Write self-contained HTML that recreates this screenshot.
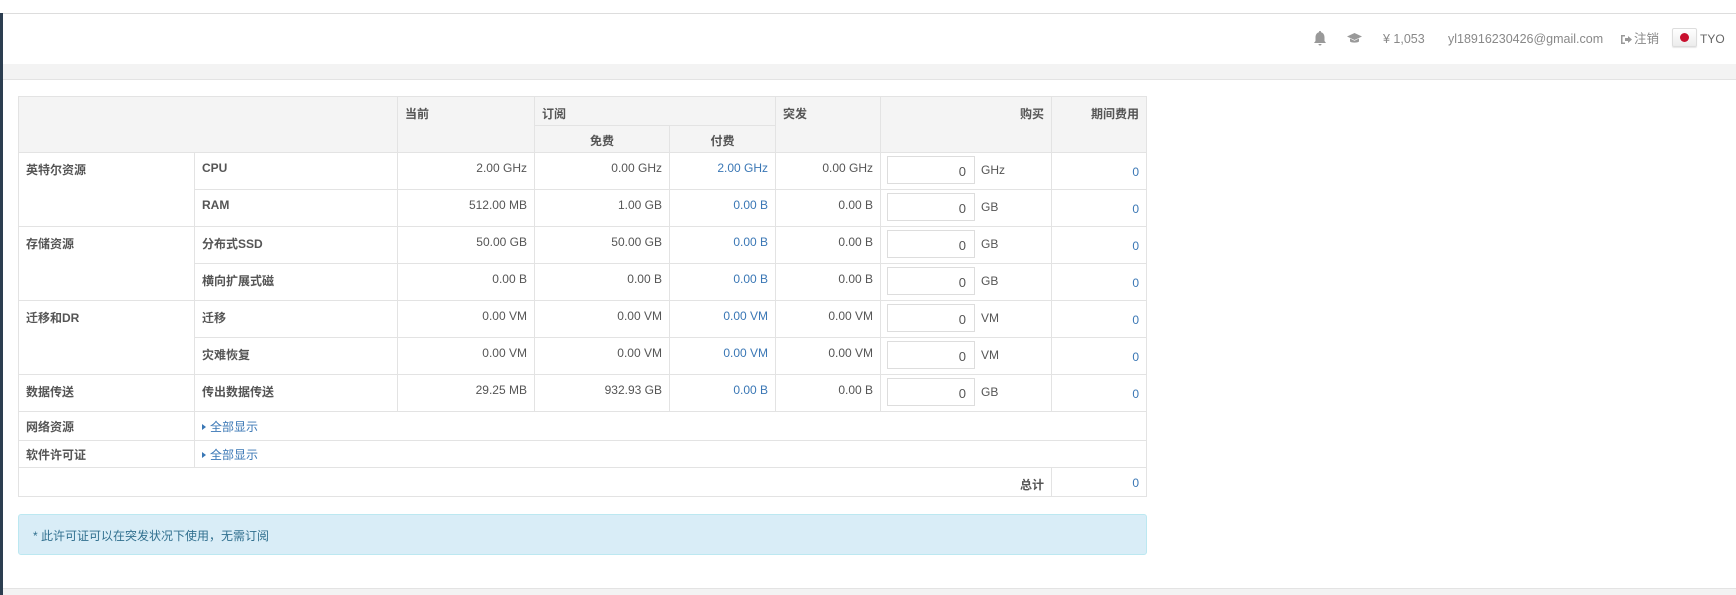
<!DOCTYPE html>
<html><head><meta charset="utf-8"><style>
*{box-sizing:border-box;margin:0;padding:0}
body{width:1736px;height:595px;background:#fff;font-family:"Liberation Sans","Noto Sans CJK SC",sans-serif;font-size:12px;color:#555;position:relative;overflow:hidden}
.lbar{position:absolute;left:0;top:13px;width:3px;height:582px;background:#2c3e50}
.topline{position:absolute;left:0;top:13px;width:1736px;height:1px;background:#ddd}
.band{position:absolute;left:3px;top:64px;width:1733px;height:16px;background:#f3f3f3;border-bottom:1px solid #e3e3e3}
.bot{position:absolute;left:3px;top:588px;width:1733px;height:7px;background:#f3f3f3;border-top:1px solid #e3e3e3}
.nav{position:absolute;top:31px;font-size:12.5px;color:#888;line-height:16px}
table{position:absolute;left:18px;top:96px;border-collapse:collapse;table-layout:fixed;width:1128px}
td,th{border:1px solid #e3e3e3;vertical-align:top;padding:8px 7px 0 7px;font-weight:normal;overflow:hidden;white-space:nowrap}
th{background:#f4f4f4;font-weight:bold;color:#555;text-align:left}
td.b{font-weight:bold}
td.r,th.r{text-align:right}
.bl{color:#3a77b5}
td.in{padding:3px 6px 0 6px;vertical-align:top}
.ib{display:inline-block;width:88px;height:28px;border:1px solid #ddd;text-align:right;padding:7px 8px 0 0;font-size:13px;color:#555;vertical-align:middle}
.u{display:inline-block;margin-left:6px;vertical-align:middle}
tr.d td{height:37px}
.alert{position:absolute;left:18px;top:514px;width:1129px;height:41px;background:#d9edf7;border:1px solid #bce8f1;border-radius:3px;color:#31708f;padding:12px 14px;font-size:12px}
.tri{display:inline-block;width:0;height:0;border-left:4px solid #3a77b5;border-top:3px solid transparent;border-bottom:3px solid transparent;margin-right:4px;vertical-align:1px}
</style></head><body>
<div class="topline"></div><div class="lbar"></div>
<svg class="nav" style="left:1313px;top:30px" width="14" height="16" viewBox="0 0 14 16"><path d="M7 1a1 1 0 0 1 1 1.2C10.5 2.8 11.5 5 11.5 7.5V11l1.5 2H1l1.5-2V7.5C2.5 5 3.5 2.8 6 2.2A1 1 0 0 1 7 1z" fill="#999"/><path d="M5.5 14a1.5 1.5 0 0 0 3 0z" fill="#999"/></svg>
<svg class="nav" style="left:1346px;top:32px" width="17" height="12" viewBox="0 0 17 12"><path d="M8.5 1L1 4.5 8.5 8 16 4.5z" fill="#999"/><path d="M4 6.5v3c1.5 1.5 7.5 1.5 9 0v-3L8.5 8.7z" fill="#999"/></svg>
<div class="nav" style="left:1383px">¥ 1,053</div>
<div class="nav" style="left:1448px">yl18916230426@gmail.com</div>
<svg class="nav" style="left:1620px;top:34px" width="12" height="11" viewBox="0 0 12 11"><path d="M1 1h4v1.5H2.5v6H5V10H1z" fill="#999"/><path d="M5 4h3V2l4 3.5L8 9V7H5z" fill="#999"/></svg>
<div class="nav" style="left:1634px">注销</div>
<div style="position:absolute;left:1672px;top:28px;width:25px;height:19px;background:linear-gradient(#fff,#ececec);border:1px solid #ddd;border-radius:2px;box-shadow:0 1px 1px rgba(0,0,0,.1)"><div style="position:absolute;left:7px;top:4px;width:9px;height:9px;border-radius:50%;background:#c8102e"></div></div>
<div class="nav" style="left:1700px;color:#666;font-size:12px">TYO</div>
<div class="band"></div>
<table>
<colgroup><col style="width:176px"><col style="width:203px"><col style="width:137px"><col style="width:135px"><col style="width:106px"><col style="width:105px"><col style="width:171px"><col style="width:95px"></colgroup>
<tr style="height:29px"><th colspan="2" rowspan="2"></th><th rowspan="2">当前</th><th colspan="2">订阅</th><th rowspan="2">突发</th><th rowspan="2" class="r">购买</th><th rowspan="2" class="r">期间费用</th></tr>
<tr style="height:27px"><th style="text-align:center;padding-top:6px">免费</th><th style="text-align:center;padding-top:6px">付费</th></tr>
<tr class="d"><td class="b" rowspan="2">英特尔资源</td><td class="b">CPU</td><td class="r">2.00 GHz</td><td class="r">0.00 GHz</td><td class="r bl">2.00 GHz</td><td class="r">0.00 GHz</td><td class="in"><span class="ib">0</span><span class="u">GHz</span></td><td class="r bl" style="padding-top:12px">0</td></tr>
<tr class="d"><td class="b">RAM</td><td class="r">512.00 MB</td><td class="r">1.00 GB</td><td class="r bl">0.00 B</td><td class="r">0.00 B</td><td class="in"><span class="ib">0</span><span class="u">GB</span></td><td class="r bl" style="padding-top:12px">0</td></tr>
<tr class="d"><td class="b" rowspan="2">存储资源</td><td class="b">分布式SSD</td><td class="r">50.00 GB</td><td class="r">50.00 GB</td><td class="r bl">0.00 B</td><td class="r">0.00 B</td><td class="in"><span class="ib">0</span><span class="u">GB</span></td><td class="r bl" style="padding-top:12px">0</td></tr>
<tr class="d"><td class="b">横向扩展式磁</td><td class="r">0.00 B</td><td class="r">0.00 B</td><td class="r bl">0.00 B</td><td class="r">0.00 B</td><td class="in"><span class="ib">0</span><span class="u">GB</span></td><td class="r bl" style="padding-top:12px">0</td></tr>
<tr class="d"><td class="b" rowspan="2">迁移和DR</td><td class="b">迁移</td><td class="r">0.00 VM</td><td class="r">0.00 VM</td><td class="r bl">0.00 VM</td><td class="r">0.00 VM</td><td class="in"><span class="ib">0</span><span class="u">VM</span></td><td class="r bl" style="padding-top:12px">0</td></tr>
<tr class="d"><td class="b">灾难恢复</td><td class="r">0.00 VM</td><td class="r">0.00 VM</td><td class="r bl">0.00 VM</td><td class="r">0.00 VM</td><td class="in"><span class="ib">0</span><span class="u">VM</span></td><td class="r bl" style="padding-top:12px">0</td></tr>
<tr class="d"><td class="b">数据传送</td><td class="b">传出数据传送</td><td class="r">29.25 MB</td><td class="r">932.93 GB</td><td class="r bl">0.00 B</td><td class="r">0.00 B</td><td class="in"><span class="ib">0</span><span class="u">GB</span></td><td class="r bl" style="padding-top:12px">0</td></tr>
<tr style="height:29px"><td class="b" style="padding-top:6px">网络资源</td><td colspan="7" class="bl" style="padding-top:6px"><span class="tri"></span>全部显示</td></tr>
<tr style="height:27px"><td class="b" style="padding-top:5px">软件许可证</td><td colspan="7" class="bl" style="padding-top:5px"><span class="tri"></span>全部显示</td></tr>
<tr style="height:29px"><td colspan="7" class="r b">总计</td><td class="r bl">0</td></tr>
</table>
<div class="alert">* 此许可证可以在突发状况下使用，无需订阅</div>
<div class="bot"></div>
</body></html>
